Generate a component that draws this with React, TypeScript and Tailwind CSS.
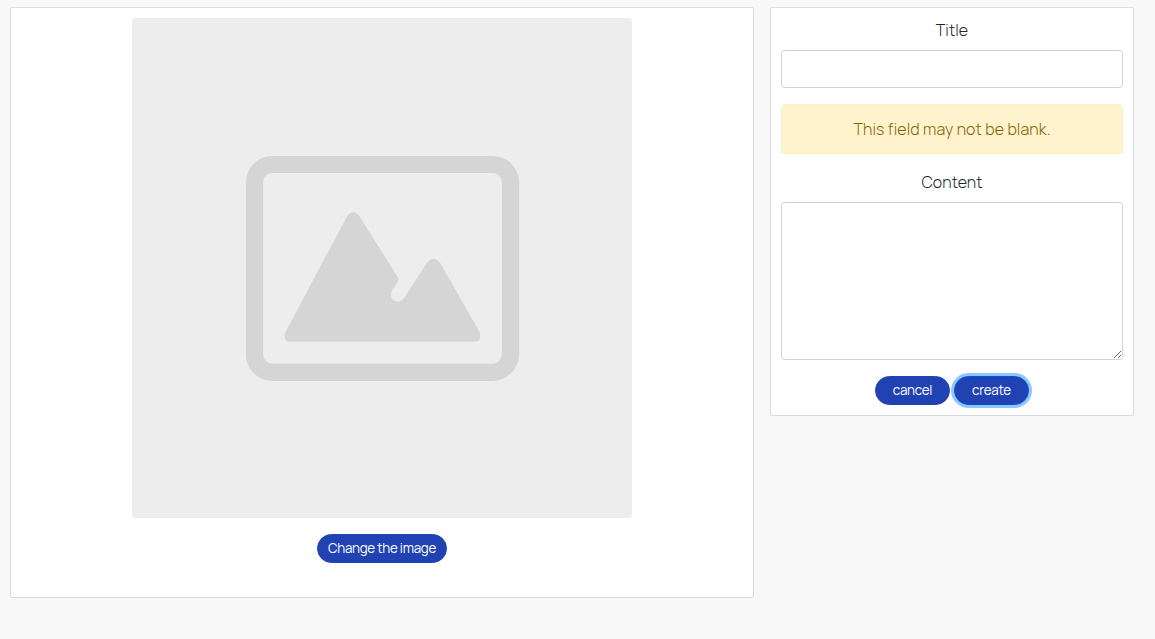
import type { ReactNode } from "react";

function PillButton({ children, className }: { children: ReactNode; className: string }) {
  return (
    <button
      type="button"
      className={`h-[29px] rounded-full border bg-[#2142b2] text-center text-[13.333px] leading-[27px] font-normal whitespace-nowrap text-white outline-none ${className}`}
    >
      {children}
    </button>
  );
}

function PlaceholderImage() {
  return (
    <svg viewBox="132 18 500 500" className="block size-[500px] rounded bg-[#ededed]" aria-hidden="true">
      <rect x="254.5" y="164.5" width="256" height="207.8" rx="18" fill="none" stroke="#d5d5d5" strokeWidth="17.2" />
      <path
        fill="#d5d5d5"
        d="M347.5 215.5Q353 208.5 359 215.5L397.6 277Q399 279.5 397.6 282L392.2 290C386.500 298.500 398.500 306.500 404 298L426.500 263.500Q433.500 254 440.500 263.500L479.500 332Q482.500 341.700 474 341.700H291Q283 341.700 285 333Z"
      />
    </svg>
  );
}

export default function App() {
  return (
    <main className="flex min-h-[639px] items-start gap-4 bg-[#f8f8f8] pt-[7px] pl-[10px] font-['Manrope','Inter','Liberation_Sans',sans-serif] font-light text-[#212529]">
      <section className="flex h-[591px] w-[744px] flex-col items-center rounded-[2px] border border-[#dadadf] bg-white pt-[10px]">
        <PlaceholderImage />
        <PillButton className="mt-4 w-[130px] border-[#2142b2] tracking-[-0.27px]">Change the image</PillButton>
      </section>

      <form className="flex h-[409px] w-[364px] flex-col rounded-[2px] border border-[#dadadf] bg-white px-[10px] pt-[10px]">
        <label htmlFor="title" className="mb-2 text-center text-base leading-6 tracking-[0.1px]">
          Title
        </label>
        <input
          id="title"
          type="text"
          className="h-[38px] w-full rounded border border-[#ced4da] bg-white px-3 outline-none"
        />
        <div
          role="alert"
          className="mt-4 mb-4 h-[50px] rounded border border-[#ffeeba] bg-[#fff3cd] text-center text-base leading-[48px] tracking-[0.12px] text-[#856404]"
        >
          This field may not be blank.
        </div>
        <label htmlFor="content" className="mb-2 text-center text-base leading-6 tracking-[0.1px]">
          Content
        </label>
        <textarea
          id="content"
          className="block h-[158px] w-full shrink-0 resize rounded border border-[#ced4da] bg-white px-3 py-1.5 outline-none"
        />
        <div className="mt-4 flex justify-center gap-1">
          <PillButton className="w-[75px] border-[#2142b2] tracking-[-0.2px]">cancel</PillButton>
          <PillButton className="w-[75px] border-[#0055cc] tracking-[-0.2px] shadow-[0_0_0_3px_#90c6ff]">
            create
          </PillButton>
        </div>
      </form>
    </main>
  );
}
